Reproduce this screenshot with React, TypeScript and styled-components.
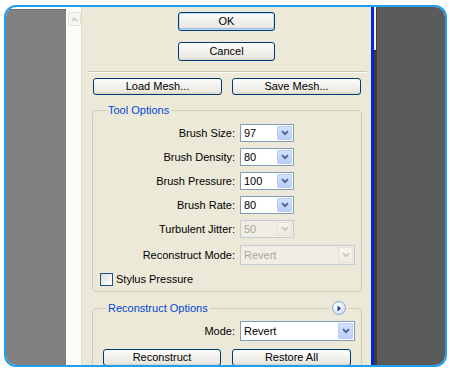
import React from "react";
import styled, { createGlobalStyle, css } from "styled-components";

const GlobalStyle = createGlobalStyle`
  html, body {
    margin: 0;
    padding: 0;
    background: #ffffff;
  }
  body {
    font-family: "Liberation Sans", Arial, sans-serif;
    font-size: 11px;
    color: #000;
  }
`;

const Frame = styled.div`
  box-sizing: border-box;
  margin: 5px 0 0 4px;
  width: 443px;
  height: 362px;
  border: 2px solid #1ba1f0;
  border-radius: 12px;
  overflow: hidden;
  display: flex;
  background: #fdfdfb;
`;

const GrayPane = styled.div`
  width: 60px;
  margin-top: 2px;
  border-top: 1px solid #6c6c6c;
  background: #808080;
`;

const ScrollStrip = styled.div`
  box-sizing: border-box;
  width: 16px;
  background: #fcfcf9;
  border-right: 1px solid #dedbcd;
  padding: 5px 1px 0 2px;
`;

const ScrollUp = styled.div`
  box-sizing: border-box;
  width: 13px;
  height: 14px;
  border: 1px solid #e4e2d9;
  border-radius: 2px;
  background: #f7f6f1;
  display: flex;
  align-items: center;
  justify-content: center;
`;

const Panel = styled.div`
  width: 289px;
  flex-shrink: 0;
  background: #ece9d8;
  display: flex;
  flex-direction: column;
  padding-top: 5px;
  overflow: hidden;
`;

const Button = styled.button<{ $w: number; $default?: boolean }>`
  box-sizing: border-box;
  width: ${(p) => p.$w}px;
  height: ${(p) => (p.$default !== undefined ? 19 : 17)}px;
  padding: 0;
  border: 1px solid #003c74;
  border-radius: 3px;
  background: linear-gradient(#ffffff 0%, #f3f2ee 40%, #ebe9e2 85%, #d8d3c6 100%);
  font-family: "Liberation Sans", Arial, sans-serif;
  font-size: 11px;
  color: #000;
  line-height: 1;
  ${(p) =>
    p.$default &&
    css`
      box-shadow: inset 0 0 0 1px #c2d6f6, inset 0 -1px 0 1px #9ebbec;
    `}
`;

const CenterStack = styled.div`
  display: flex;
  flex-direction: column;
  align-items: center;
  gap: 11px;
`;

const Separator = styled.div`
  margin: 10px 4px 0 6px;
  height: 0;
  border-top: 1px solid #cbc8b8;
  border-bottom: 1px solid #fbfbf7;
`;

const ButtonRow = styled.div<{ $pad: number; $gap: number; $top: number }>`
  display: flex;
  gap: ${(p) => p.$gap}px;
  padding-left: ${(p) => p.$pad}px;
  margin-top: ${(p) => p.$top}px;
`;

const Group = styled.fieldset<{ $top: number }>`
  position: relative;
  margin: ${(p) => p.$top}px 9px 0 10px;
  padding: 3px 0 1px 0;
  border: 1px solid #d0cdbd;
  border-radius: 4px;
  min-width: 0;
  flex-shrink: 0;
`;

const Legend = styled.legend`
  margin-left: 13px;
  padding: 0 2px;
  font-size: 11px;
  line-height: 13px;
  color: #0046d5;
`;

const Grid = styled.div`
  display: grid;
  grid-template-columns: 142px 1fr;
  column-gap: 5px;
`;

const Label = styled.div<{ $h: number }>`
  height: ${(p) => p.$h}px;
  display: flex;
  align-items: center;
  justify-content: flex-end;
  white-space: nowrap;
  color: #000;
`;

const Cell = styled.div<{ $h: number }>`
  height: ${(p) => p.$h}px;
  display: flex;
  align-items: center;
`;

const SelectBox = styled.div<{ $w: number; $h: number; $disabled?: boolean }>`
  box-sizing: border-box;
  width: ${(p) => p.$w}px;
  height: ${(p) => p.$h}px;
  border: 1px solid ${(p) => (p.$disabled ? "#c3cbd8" : "#7f9db9")};
  background: ${(p) => (p.$disabled ? "#f0eee4" : "#ffffff")};
  color: ${(p) => (p.$disabled ? "#aca899" : "#000")};
  display: flex;
  align-items: stretch;
  padding: 1px;
`;

const SelectText = styled.span`
  flex: 1;
  display: flex;
  align-items: center;
  padding-left: 2px;
  font-size: 11px;
`;

const DropButton = styled.span<{ $disabled?: boolean }>`
  width: 15px;
  border-radius: 1px;
  display: flex;
  align-items: center;
  justify-content: center;
  background: ${(p) =>
    p.$disabled
      ? "linear-gradient(#f6f5f0, #eceae2)"
      : "linear-gradient(#d6e2fe, #b8cdf9)"};
  border: 1px solid ${(p) => (p.$disabled ? "#e3e1d8" : "#bccdf5")};
  box-sizing: border-box;
`;

const CheckRow = styled.div`
  grid-column: 1 / 3;
  height: 22px;
  display: flex;
  align-items: center;
  gap: 3px;
  padding-left: 7px;
`;

const CheckBox = styled.span`
  box-sizing: border-box;
  width: 13px;
  height: 13px;
  border: 1px solid #1c5180;
  background: linear-gradient(135deg, #dcdcd7, #ffffff);
`;

// sits on the group's top border, next to the legend
const RoundButton = styled.span`
  position: absolute;
  top: -16px;
  right: 13px;
  padding: 2px;
  background: #ece9d8;
  display: flex;
`;

const Circle = styled.span`
  box-sizing: border-box;
  width: 14px;
  height: 14px;
  border-radius: 50%;
  border: 1px solid #8ca6dc;
  background: radial-gradient(circle at 40% 35%, #ffffff, #c6d6f8);
  display: flex;
  align-items: center;
  justify-content: center;
`;

const BlueEdge = styled.div`
  width: 3px;
  flex-shrink: 0;
  background: #0024d6;
`;

const ThinStrip = styled.div`
  width: 3px;
  flex-shrink: 0;
  background: #3c3c3c;
`;

const Thumb = styled.div`
  width: 2px;
  height: 43px;
  background: #f2f2f2;
  border-bottom: 1px solid #1e1e1e;
`;

const DarkPane = styled.div`
  flex: 1;
  background: #5b5b5b;
`;

const Chevron = ({ color }: { color: string }) => (
  <svg width="8" height="6" viewBox="0 0 8 6">
    <path d="M1 1.2 L4 4.2 L7 1.2" stroke={color} strokeWidth="1.8" fill="none" />
  </svg>
);

interface SelectProps {
  value: string;
  w: number;
  h?: number;
  disabled?: boolean;
}

const Select = ({ value, w, h = 18, disabled }: SelectProps) => (
  <SelectBox $w={w} $h={h} $disabled={disabled}>
    <SelectText>{value}</SelectText>
    <DropButton $disabled={disabled}>
      <Chevron color={disabled ? "#cbc9be" : "#4d6185"} />
    </DropButton>
  </SelectBox>
);

const toolRows = [
  { label: "Brush Size:", value: "97", h: 25 },
  { label: "Brush Density:", value: "80", h: 24 },
  { label: "Brush Pressure:", value: "100", h: 24 },
  { label: "Brush Rate:", value: "80", h: 24 },
  { label: "Turbulent Jitter:", value: "50", h: 24, disabled: true },
];

export default function App() {
  return (
    <>
      <GlobalStyle />
      <Frame>
        <GrayPane />
        <ScrollStrip>
          <ScrollUp>
            <svg width="7" height="5" viewBox="0 0 7 5">
              <path d="M0.8 4 L3.5 1.3 L6.2 4" stroke="#c9c8c0" strokeWidth="1.6" fill="none" />
            </svg>
          </ScrollUp>
        </ScrollStrip>
        <Panel>
          <CenterStack>
            <Button $w={97} $default>OK</Button>
            <Button $w={97} $default={false}>Cancel</Button>
          </CenterStack>
          <Separator />
          <ButtonRow $pad={11} $gap={10} $top={5}>
            <Button $w={129}>Load Mesh...</Button>
            <Button $w={129}>Save Mesh...</Button>
          </ButtonRow>

          <Group $top={9}>
            <Legend>Tool Options</Legend>
            <Grid>
              {toolRows.map((r) => (
                <React.Fragment key={r.label}>
                  <Label $h={r.h}>{r.label}</Label>
                  <Cell $h={r.h}>
                    <Select value={r.value} w={54} disabled={r.disabled} />
                  </Cell>
                </React.Fragment>
              ))}
              <Label $h={27}>Reconstruct Mode:</Label>
              <Cell $h={27}>
                <Select value="Revert" w={115} h={20} disabled />
              </Cell>
              <CheckRow>
                <CheckBox />
                <span>Stylus Pressure</span>
              </CheckRow>
            </Grid>
          </Group>

          <Group $top={10}>
            <Legend>Reconstruct Options</Legend>
            <RoundButton>
              <Circle>
                <svg width="6" height="7" viewBox="0 0 6 7">
                  <path d="M1.5 0.5 L5 3.5 L1.5 6.5 Z" fill="#1b3a8c" />
                </svg>
              </Circle>
            </RoundButton>
            <Grid>
              <Label $h={26}>Mode:</Label>
              <Cell $h={26}>
                <Select value="Revert" w={115} h={20} />
              </Cell>
            </Grid>
            <ButtonRow $pad={10} $gap={11} $top={5}>
              <Button $w={118}>Reconstruct</Button>
              <Button $w={119}>Restore All</Button>
            </ButtonRow>
          </Group>
        </Panel>
        <BlueEdge />
        <ThinStrip>
          <Thumb />
        </ThinStrip>
        <DarkPane />
      </Frame>
    </>
  );
}
